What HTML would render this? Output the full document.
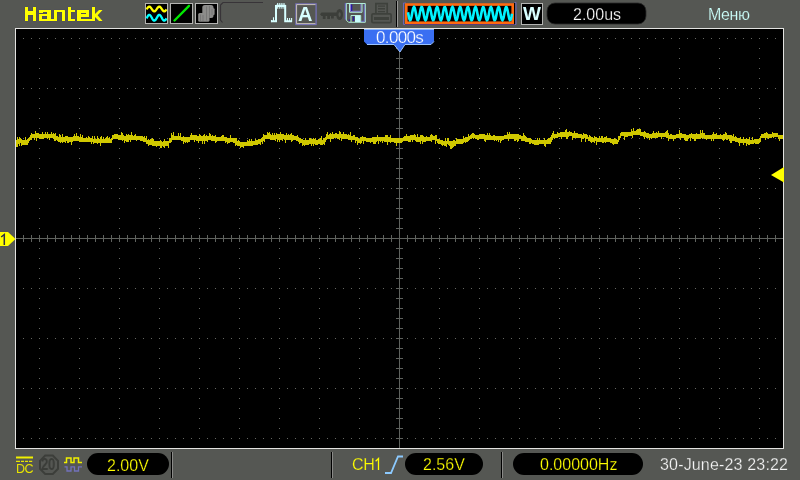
<!DOCTYPE html>
<html><head><meta charset="utf-8">
<style>
html,body{margin:0;padding:0;}
body{width:800px;height:480px;overflow:hidden;background:#555753;position:relative;font-family:"Liberation Sans",sans-serif;}
svg{position:absolute;left:0;top:0;}
.t{position:absolute;white-space:nowrap;line-height:1;will-change:transform;}
</style></head><body>
<svg width="800" height="480" viewBox="0 0 800 480">
<defs><filter id="blur" x="-20%" y="-20%" width="140%" height="140%"><feGaussianBlur stdDeviation="0.6"/></filter></defs>
<rect x="15" y="28" width="769" height="421" fill="#e2e2e0"/>
<rect x="16" y="29" width="767" height="419" fill="#000"/>
<g shape-rendering="crispEdges">
<path d="M23 38h1v1h-1zM23 88h1v1h-1zM23 138h1v1h-1zM23 188h1v1h-1zM23 288h1v1h-1zM23 338h1v1h-1zM23 388h1v1h-1zM23 438h1v1h-1zM31 38h1v1h-1zM31 88h1v1h-1zM31 138h1v1h-1zM31 188h1v1h-1zM31 288h1v1h-1zM31 338h1v1h-1zM31 388h1v1h-1zM31 438h1v1h-1zM39 38h1v1h-1zM39 48h1v1h-1zM39 58h1v1h-1zM39 68h1v1h-1zM39 78h1v1h-1zM39 88h1v1h-1zM39 98h1v1h-1zM39 108h1v1h-1zM39 118h1v1h-1zM39 128h1v1h-1zM39 138h1v1h-1zM39 148h1v1h-1zM39 158h1v1h-1zM39 168h1v1h-1zM39 178h1v1h-1zM39 188h1v1h-1zM39 198h1v1h-1zM39 208h1v1h-1zM39 218h1v1h-1zM39 228h1v1h-1zM39 238h1v1h-1zM39 248h1v1h-1zM39 258h1v1h-1zM39 268h1v1h-1zM39 278h1v1h-1zM39 288h1v1h-1zM39 298h1v1h-1zM39 308h1v1h-1zM39 318h1v1h-1zM39 328h1v1h-1zM39 338h1v1h-1zM39 348h1v1h-1zM39 358h1v1h-1zM39 368h1v1h-1zM39 378h1v1h-1zM39 388h1v1h-1zM39 398h1v1h-1zM39 408h1v1h-1zM39 418h1v1h-1zM39 428h1v1h-1zM39 438h1v1h-1zM47 38h1v1h-1zM47 88h1v1h-1zM47 138h1v1h-1zM47 188h1v1h-1zM47 288h1v1h-1zM47 338h1v1h-1zM47 388h1v1h-1zM47 438h1v1h-1zM55 38h1v1h-1zM55 88h1v1h-1zM55 138h1v1h-1zM55 188h1v1h-1zM55 288h1v1h-1zM55 338h1v1h-1zM55 388h1v1h-1zM55 438h1v1h-1zM63 38h1v1h-1zM63 88h1v1h-1zM63 138h1v1h-1zM63 188h1v1h-1zM63 288h1v1h-1zM63 338h1v1h-1zM63 388h1v1h-1zM63 438h1v1h-1zM71 38h1v1h-1zM71 88h1v1h-1zM71 138h1v1h-1zM71 188h1v1h-1zM71 288h1v1h-1zM71 338h1v1h-1zM71 388h1v1h-1zM71 438h1v1h-1zM79 38h1v1h-1zM79 48h1v1h-1zM79 58h1v1h-1zM79 68h1v1h-1zM79 78h1v1h-1zM79 88h1v1h-1zM79 98h1v1h-1zM79 108h1v1h-1zM79 118h1v1h-1zM79 128h1v1h-1zM79 138h1v1h-1zM79 148h1v1h-1zM79 158h1v1h-1zM79 168h1v1h-1zM79 178h1v1h-1zM79 188h1v1h-1zM79 198h1v1h-1zM79 208h1v1h-1zM79 218h1v1h-1zM79 228h1v1h-1zM79 238h1v1h-1zM79 248h1v1h-1zM79 258h1v1h-1zM79 268h1v1h-1zM79 278h1v1h-1zM79 288h1v1h-1zM79 298h1v1h-1zM79 308h1v1h-1zM79 318h1v1h-1zM79 328h1v1h-1zM79 338h1v1h-1zM79 348h1v1h-1zM79 358h1v1h-1zM79 368h1v1h-1zM79 378h1v1h-1zM79 388h1v1h-1zM79 398h1v1h-1zM79 408h1v1h-1zM79 418h1v1h-1zM79 428h1v1h-1zM79 438h1v1h-1zM87 38h1v1h-1zM87 88h1v1h-1zM87 138h1v1h-1zM87 188h1v1h-1zM87 288h1v1h-1zM87 338h1v1h-1zM87 388h1v1h-1zM87 438h1v1h-1zM95 38h1v1h-1zM95 88h1v1h-1zM95 138h1v1h-1zM95 188h1v1h-1zM95 288h1v1h-1zM95 338h1v1h-1zM95 388h1v1h-1zM95 438h1v1h-1zM103 38h1v1h-1zM103 88h1v1h-1zM103 138h1v1h-1zM103 188h1v1h-1zM103 288h1v1h-1zM103 338h1v1h-1zM103 388h1v1h-1zM103 438h1v1h-1zM111 38h1v1h-1zM111 88h1v1h-1zM111 138h1v1h-1zM111 188h1v1h-1zM111 288h1v1h-1zM111 338h1v1h-1zM111 388h1v1h-1zM111 438h1v1h-1zM119 38h1v1h-1zM119 48h1v1h-1zM119 58h1v1h-1zM119 68h1v1h-1zM119 78h1v1h-1zM119 88h1v1h-1zM119 98h1v1h-1zM119 108h1v1h-1zM119 118h1v1h-1zM119 128h1v1h-1zM119 138h1v1h-1zM119 148h1v1h-1zM119 158h1v1h-1zM119 168h1v1h-1zM119 178h1v1h-1zM119 188h1v1h-1zM119 198h1v1h-1zM119 208h1v1h-1zM119 218h1v1h-1zM119 228h1v1h-1zM119 238h1v1h-1zM119 248h1v1h-1zM119 258h1v1h-1zM119 268h1v1h-1zM119 278h1v1h-1zM119 288h1v1h-1zM119 298h1v1h-1zM119 308h1v1h-1zM119 318h1v1h-1zM119 328h1v1h-1zM119 338h1v1h-1zM119 348h1v1h-1zM119 358h1v1h-1zM119 368h1v1h-1zM119 378h1v1h-1zM119 388h1v1h-1zM119 398h1v1h-1zM119 408h1v1h-1zM119 418h1v1h-1zM119 428h1v1h-1zM119 438h1v1h-1zM127 38h1v1h-1zM127 88h1v1h-1zM127 138h1v1h-1zM127 188h1v1h-1zM127 288h1v1h-1zM127 338h1v1h-1zM127 388h1v1h-1zM127 438h1v1h-1zM135 38h1v1h-1zM135 88h1v1h-1zM135 138h1v1h-1zM135 188h1v1h-1zM135 288h1v1h-1zM135 338h1v1h-1zM135 388h1v1h-1zM135 438h1v1h-1zM143 38h1v1h-1zM143 88h1v1h-1zM143 138h1v1h-1zM143 188h1v1h-1zM143 288h1v1h-1zM143 338h1v1h-1zM143 388h1v1h-1zM143 438h1v1h-1zM151 38h1v1h-1zM151 88h1v1h-1zM151 138h1v1h-1zM151 188h1v1h-1zM151 288h1v1h-1zM151 338h1v1h-1zM151 388h1v1h-1zM151 438h1v1h-1zM159 38h1v1h-1zM159 48h1v1h-1zM159 58h1v1h-1zM159 68h1v1h-1zM159 78h1v1h-1zM159 88h1v1h-1zM159 98h1v1h-1zM159 108h1v1h-1zM159 118h1v1h-1zM159 128h1v1h-1zM159 138h1v1h-1zM159 148h1v1h-1zM159 158h1v1h-1zM159 168h1v1h-1zM159 178h1v1h-1zM159 188h1v1h-1zM159 198h1v1h-1zM159 208h1v1h-1zM159 218h1v1h-1zM159 228h1v1h-1zM159 238h1v1h-1zM159 248h1v1h-1zM159 258h1v1h-1zM159 268h1v1h-1zM159 278h1v1h-1zM159 288h1v1h-1zM159 298h1v1h-1zM159 308h1v1h-1zM159 318h1v1h-1zM159 328h1v1h-1zM159 338h1v1h-1zM159 348h1v1h-1zM159 358h1v1h-1zM159 368h1v1h-1zM159 378h1v1h-1zM159 388h1v1h-1zM159 398h1v1h-1zM159 408h1v1h-1zM159 418h1v1h-1zM159 428h1v1h-1zM159 438h1v1h-1zM167 38h1v1h-1zM167 88h1v1h-1zM167 138h1v1h-1zM167 188h1v1h-1zM167 288h1v1h-1zM167 338h1v1h-1zM167 388h1v1h-1zM167 438h1v1h-1zM175 38h1v1h-1zM175 88h1v1h-1zM175 138h1v1h-1zM175 188h1v1h-1zM175 288h1v1h-1zM175 338h1v1h-1zM175 388h1v1h-1zM175 438h1v1h-1zM183 38h1v1h-1zM183 88h1v1h-1zM183 138h1v1h-1zM183 188h1v1h-1zM183 288h1v1h-1zM183 338h1v1h-1zM183 388h1v1h-1zM183 438h1v1h-1zM191 38h1v1h-1zM191 88h1v1h-1zM191 138h1v1h-1zM191 188h1v1h-1zM191 288h1v1h-1zM191 338h1v1h-1zM191 388h1v1h-1zM191 438h1v1h-1zM199 38h1v1h-1zM199 48h1v1h-1zM199 58h1v1h-1zM199 68h1v1h-1zM199 78h1v1h-1zM199 88h1v1h-1zM199 98h1v1h-1zM199 108h1v1h-1zM199 118h1v1h-1zM199 128h1v1h-1zM199 138h1v1h-1zM199 148h1v1h-1zM199 158h1v1h-1zM199 168h1v1h-1zM199 178h1v1h-1zM199 188h1v1h-1zM199 198h1v1h-1zM199 208h1v1h-1zM199 218h1v1h-1zM199 228h1v1h-1zM199 238h1v1h-1zM199 248h1v1h-1zM199 258h1v1h-1zM199 268h1v1h-1zM199 278h1v1h-1zM199 288h1v1h-1zM199 298h1v1h-1zM199 308h1v1h-1zM199 318h1v1h-1zM199 328h1v1h-1zM199 338h1v1h-1zM199 348h1v1h-1zM199 358h1v1h-1zM199 368h1v1h-1zM199 378h1v1h-1zM199 388h1v1h-1zM199 398h1v1h-1zM199 408h1v1h-1zM199 418h1v1h-1zM199 428h1v1h-1zM199 438h1v1h-1zM207 38h1v1h-1zM207 88h1v1h-1zM207 138h1v1h-1zM207 188h1v1h-1zM207 288h1v1h-1zM207 338h1v1h-1zM207 388h1v1h-1zM207 438h1v1h-1zM215 38h1v1h-1zM215 88h1v1h-1zM215 138h1v1h-1zM215 188h1v1h-1zM215 288h1v1h-1zM215 338h1v1h-1zM215 388h1v1h-1zM215 438h1v1h-1zM223 38h1v1h-1zM223 88h1v1h-1zM223 138h1v1h-1zM223 188h1v1h-1zM223 288h1v1h-1zM223 338h1v1h-1zM223 388h1v1h-1zM223 438h1v1h-1zM231 38h1v1h-1zM231 88h1v1h-1zM231 138h1v1h-1zM231 188h1v1h-1zM231 288h1v1h-1zM231 338h1v1h-1zM231 388h1v1h-1zM231 438h1v1h-1zM239 38h1v1h-1zM239 48h1v1h-1zM239 58h1v1h-1zM239 68h1v1h-1zM239 78h1v1h-1zM239 88h1v1h-1zM239 98h1v1h-1zM239 108h1v1h-1zM239 118h1v1h-1zM239 128h1v1h-1zM239 138h1v1h-1zM239 148h1v1h-1zM239 158h1v1h-1zM239 168h1v1h-1zM239 178h1v1h-1zM239 188h1v1h-1zM239 198h1v1h-1zM239 208h1v1h-1zM239 218h1v1h-1zM239 228h1v1h-1zM239 238h1v1h-1zM239 248h1v1h-1zM239 258h1v1h-1zM239 268h1v1h-1zM239 278h1v1h-1zM239 288h1v1h-1zM239 298h1v1h-1zM239 308h1v1h-1zM239 318h1v1h-1zM239 328h1v1h-1zM239 338h1v1h-1zM239 348h1v1h-1zM239 358h1v1h-1zM239 368h1v1h-1zM239 378h1v1h-1zM239 388h1v1h-1zM239 398h1v1h-1zM239 408h1v1h-1zM239 418h1v1h-1zM239 428h1v1h-1zM239 438h1v1h-1zM247 38h1v1h-1zM247 88h1v1h-1zM247 138h1v1h-1zM247 188h1v1h-1zM247 288h1v1h-1zM247 338h1v1h-1zM247 388h1v1h-1zM247 438h1v1h-1zM255 38h1v1h-1zM255 88h1v1h-1zM255 138h1v1h-1zM255 188h1v1h-1zM255 288h1v1h-1zM255 338h1v1h-1zM255 388h1v1h-1zM255 438h1v1h-1zM263 38h1v1h-1zM263 88h1v1h-1zM263 138h1v1h-1zM263 188h1v1h-1zM263 288h1v1h-1zM263 338h1v1h-1zM263 388h1v1h-1zM263 438h1v1h-1zM271 38h1v1h-1zM271 88h1v1h-1zM271 138h1v1h-1zM271 188h1v1h-1zM271 288h1v1h-1zM271 338h1v1h-1zM271 388h1v1h-1zM271 438h1v1h-1zM279 38h1v1h-1zM279 48h1v1h-1zM279 58h1v1h-1zM279 68h1v1h-1zM279 78h1v1h-1zM279 88h1v1h-1zM279 98h1v1h-1zM279 108h1v1h-1zM279 118h1v1h-1zM279 128h1v1h-1zM279 138h1v1h-1zM279 148h1v1h-1zM279 158h1v1h-1zM279 168h1v1h-1zM279 178h1v1h-1zM279 188h1v1h-1zM279 198h1v1h-1zM279 208h1v1h-1zM279 218h1v1h-1zM279 228h1v1h-1zM279 238h1v1h-1zM279 248h1v1h-1zM279 258h1v1h-1zM279 268h1v1h-1zM279 278h1v1h-1zM279 288h1v1h-1zM279 298h1v1h-1zM279 308h1v1h-1zM279 318h1v1h-1zM279 328h1v1h-1zM279 338h1v1h-1zM279 348h1v1h-1zM279 358h1v1h-1zM279 368h1v1h-1zM279 378h1v1h-1zM279 388h1v1h-1zM279 398h1v1h-1zM279 408h1v1h-1zM279 418h1v1h-1zM279 428h1v1h-1zM279 438h1v1h-1zM287 38h1v1h-1zM287 88h1v1h-1zM287 138h1v1h-1zM287 188h1v1h-1zM287 288h1v1h-1zM287 338h1v1h-1zM287 388h1v1h-1zM287 438h1v1h-1zM295 38h1v1h-1zM295 88h1v1h-1zM295 138h1v1h-1zM295 188h1v1h-1zM295 288h1v1h-1zM295 338h1v1h-1zM295 388h1v1h-1zM295 438h1v1h-1zM303 38h1v1h-1zM303 88h1v1h-1zM303 138h1v1h-1zM303 188h1v1h-1zM303 288h1v1h-1zM303 338h1v1h-1zM303 388h1v1h-1zM303 438h1v1h-1zM311 38h1v1h-1zM311 88h1v1h-1zM311 138h1v1h-1zM311 188h1v1h-1zM311 288h1v1h-1zM311 338h1v1h-1zM311 388h1v1h-1zM311 438h1v1h-1zM319 38h1v1h-1zM319 48h1v1h-1zM319 58h1v1h-1zM319 68h1v1h-1zM319 78h1v1h-1zM319 88h1v1h-1zM319 98h1v1h-1zM319 108h1v1h-1zM319 118h1v1h-1zM319 128h1v1h-1zM319 138h1v1h-1zM319 148h1v1h-1zM319 158h1v1h-1zM319 168h1v1h-1zM319 178h1v1h-1zM319 188h1v1h-1zM319 198h1v1h-1zM319 208h1v1h-1zM319 218h1v1h-1zM319 228h1v1h-1zM319 238h1v1h-1zM319 248h1v1h-1zM319 258h1v1h-1zM319 268h1v1h-1zM319 278h1v1h-1zM319 288h1v1h-1zM319 298h1v1h-1zM319 308h1v1h-1zM319 318h1v1h-1zM319 328h1v1h-1zM319 338h1v1h-1zM319 348h1v1h-1zM319 358h1v1h-1zM319 368h1v1h-1zM319 378h1v1h-1zM319 388h1v1h-1zM319 398h1v1h-1zM319 408h1v1h-1zM319 418h1v1h-1zM319 428h1v1h-1zM319 438h1v1h-1zM327 38h1v1h-1zM327 88h1v1h-1zM327 138h1v1h-1zM327 188h1v1h-1zM327 288h1v1h-1zM327 338h1v1h-1zM327 388h1v1h-1zM327 438h1v1h-1zM335 38h1v1h-1zM335 88h1v1h-1zM335 138h1v1h-1zM335 188h1v1h-1zM335 288h1v1h-1zM335 338h1v1h-1zM335 388h1v1h-1zM335 438h1v1h-1zM343 38h1v1h-1zM343 88h1v1h-1zM343 138h1v1h-1zM343 188h1v1h-1zM343 288h1v1h-1zM343 338h1v1h-1zM343 388h1v1h-1zM343 438h1v1h-1zM351 38h1v1h-1zM351 88h1v1h-1zM351 138h1v1h-1zM351 188h1v1h-1zM351 288h1v1h-1zM351 338h1v1h-1zM351 388h1v1h-1zM351 438h1v1h-1zM359 38h1v1h-1zM359 48h1v1h-1zM359 58h1v1h-1zM359 68h1v1h-1zM359 78h1v1h-1zM359 88h1v1h-1zM359 98h1v1h-1zM359 108h1v1h-1zM359 118h1v1h-1zM359 128h1v1h-1zM359 138h1v1h-1zM359 148h1v1h-1zM359 158h1v1h-1zM359 168h1v1h-1zM359 178h1v1h-1zM359 188h1v1h-1zM359 198h1v1h-1zM359 208h1v1h-1zM359 218h1v1h-1zM359 228h1v1h-1zM359 238h1v1h-1zM359 248h1v1h-1zM359 258h1v1h-1zM359 268h1v1h-1zM359 278h1v1h-1zM359 288h1v1h-1zM359 298h1v1h-1zM359 308h1v1h-1zM359 318h1v1h-1zM359 328h1v1h-1zM359 338h1v1h-1zM359 348h1v1h-1zM359 358h1v1h-1zM359 368h1v1h-1zM359 378h1v1h-1zM359 388h1v1h-1zM359 398h1v1h-1zM359 408h1v1h-1zM359 418h1v1h-1zM359 428h1v1h-1zM359 438h1v1h-1zM367 38h1v1h-1zM367 88h1v1h-1zM367 138h1v1h-1zM367 188h1v1h-1zM367 288h1v1h-1zM367 338h1v1h-1zM367 388h1v1h-1zM367 438h1v1h-1zM375 38h1v1h-1zM375 88h1v1h-1zM375 138h1v1h-1zM375 188h1v1h-1zM375 288h1v1h-1zM375 338h1v1h-1zM375 388h1v1h-1zM375 438h1v1h-1zM383 38h1v1h-1zM383 88h1v1h-1zM383 138h1v1h-1zM383 188h1v1h-1zM383 288h1v1h-1zM383 338h1v1h-1zM383 388h1v1h-1zM383 438h1v1h-1zM391 38h1v1h-1zM391 88h1v1h-1zM391 138h1v1h-1zM391 188h1v1h-1zM391 288h1v1h-1zM391 338h1v1h-1zM391 388h1v1h-1zM391 438h1v1h-1zM399 38h1v1h-1zM399 88h1v1h-1zM399 138h1v1h-1zM399 188h1v1h-1zM399 288h1v1h-1zM399 338h1v1h-1zM399 388h1v1h-1zM399 438h1v1h-1zM407 38h1v1h-1zM407 88h1v1h-1zM407 138h1v1h-1zM407 188h1v1h-1zM407 288h1v1h-1zM407 338h1v1h-1zM407 388h1v1h-1zM407 438h1v1h-1zM415 38h1v1h-1zM415 88h1v1h-1zM415 138h1v1h-1zM415 188h1v1h-1zM415 288h1v1h-1zM415 338h1v1h-1zM415 388h1v1h-1zM415 438h1v1h-1zM423 38h1v1h-1zM423 88h1v1h-1zM423 138h1v1h-1zM423 188h1v1h-1zM423 288h1v1h-1zM423 338h1v1h-1zM423 388h1v1h-1zM423 438h1v1h-1zM431 38h1v1h-1zM431 88h1v1h-1zM431 138h1v1h-1zM431 188h1v1h-1zM431 288h1v1h-1zM431 338h1v1h-1zM431 388h1v1h-1zM431 438h1v1h-1zM439 38h1v1h-1zM439 48h1v1h-1zM439 58h1v1h-1zM439 68h1v1h-1zM439 78h1v1h-1zM439 88h1v1h-1zM439 98h1v1h-1zM439 108h1v1h-1zM439 118h1v1h-1zM439 128h1v1h-1zM439 138h1v1h-1zM439 148h1v1h-1zM439 158h1v1h-1zM439 168h1v1h-1zM439 178h1v1h-1zM439 188h1v1h-1zM439 198h1v1h-1zM439 208h1v1h-1zM439 218h1v1h-1zM439 228h1v1h-1zM439 238h1v1h-1zM439 248h1v1h-1zM439 258h1v1h-1zM439 268h1v1h-1zM439 278h1v1h-1zM439 288h1v1h-1zM439 298h1v1h-1zM439 308h1v1h-1zM439 318h1v1h-1zM439 328h1v1h-1zM439 338h1v1h-1zM439 348h1v1h-1zM439 358h1v1h-1zM439 368h1v1h-1zM439 378h1v1h-1zM439 388h1v1h-1zM439 398h1v1h-1zM439 408h1v1h-1zM439 418h1v1h-1zM439 428h1v1h-1zM439 438h1v1h-1zM447 38h1v1h-1zM447 88h1v1h-1zM447 138h1v1h-1zM447 188h1v1h-1zM447 288h1v1h-1zM447 338h1v1h-1zM447 388h1v1h-1zM447 438h1v1h-1zM455 38h1v1h-1zM455 88h1v1h-1zM455 138h1v1h-1zM455 188h1v1h-1zM455 288h1v1h-1zM455 338h1v1h-1zM455 388h1v1h-1zM455 438h1v1h-1zM463 38h1v1h-1zM463 88h1v1h-1zM463 138h1v1h-1zM463 188h1v1h-1zM463 288h1v1h-1zM463 338h1v1h-1zM463 388h1v1h-1zM463 438h1v1h-1zM471 38h1v1h-1zM471 88h1v1h-1zM471 138h1v1h-1zM471 188h1v1h-1zM471 288h1v1h-1zM471 338h1v1h-1zM471 388h1v1h-1zM471 438h1v1h-1zM479 38h1v1h-1zM479 48h1v1h-1zM479 58h1v1h-1zM479 68h1v1h-1zM479 78h1v1h-1zM479 88h1v1h-1zM479 98h1v1h-1zM479 108h1v1h-1zM479 118h1v1h-1zM479 128h1v1h-1zM479 138h1v1h-1zM479 148h1v1h-1zM479 158h1v1h-1zM479 168h1v1h-1zM479 178h1v1h-1zM479 188h1v1h-1zM479 198h1v1h-1zM479 208h1v1h-1zM479 218h1v1h-1zM479 228h1v1h-1zM479 238h1v1h-1zM479 248h1v1h-1zM479 258h1v1h-1zM479 268h1v1h-1zM479 278h1v1h-1zM479 288h1v1h-1zM479 298h1v1h-1zM479 308h1v1h-1zM479 318h1v1h-1zM479 328h1v1h-1zM479 338h1v1h-1zM479 348h1v1h-1zM479 358h1v1h-1zM479 368h1v1h-1zM479 378h1v1h-1zM479 388h1v1h-1zM479 398h1v1h-1zM479 408h1v1h-1zM479 418h1v1h-1zM479 428h1v1h-1zM479 438h1v1h-1zM487 38h1v1h-1zM487 88h1v1h-1zM487 138h1v1h-1zM487 188h1v1h-1zM487 288h1v1h-1zM487 338h1v1h-1zM487 388h1v1h-1zM487 438h1v1h-1zM495 38h1v1h-1zM495 88h1v1h-1zM495 138h1v1h-1zM495 188h1v1h-1zM495 288h1v1h-1zM495 338h1v1h-1zM495 388h1v1h-1zM495 438h1v1h-1zM503 38h1v1h-1zM503 88h1v1h-1zM503 138h1v1h-1zM503 188h1v1h-1zM503 288h1v1h-1zM503 338h1v1h-1zM503 388h1v1h-1zM503 438h1v1h-1zM511 38h1v1h-1zM511 88h1v1h-1zM511 138h1v1h-1zM511 188h1v1h-1zM511 288h1v1h-1zM511 338h1v1h-1zM511 388h1v1h-1zM511 438h1v1h-1zM519 38h1v1h-1zM519 48h1v1h-1zM519 58h1v1h-1zM519 68h1v1h-1zM519 78h1v1h-1zM519 88h1v1h-1zM519 98h1v1h-1zM519 108h1v1h-1zM519 118h1v1h-1zM519 128h1v1h-1zM519 138h1v1h-1zM519 148h1v1h-1zM519 158h1v1h-1zM519 168h1v1h-1zM519 178h1v1h-1zM519 188h1v1h-1zM519 198h1v1h-1zM519 208h1v1h-1zM519 218h1v1h-1zM519 228h1v1h-1zM519 238h1v1h-1zM519 248h1v1h-1zM519 258h1v1h-1zM519 268h1v1h-1zM519 278h1v1h-1zM519 288h1v1h-1zM519 298h1v1h-1zM519 308h1v1h-1zM519 318h1v1h-1zM519 328h1v1h-1zM519 338h1v1h-1zM519 348h1v1h-1zM519 358h1v1h-1zM519 368h1v1h-1zM519 378h1v1h-1zM519 388h1v1h-1zM519 398h1v1h-1zM519 408h1v1h-1zM519 418h1v1h-1zM519 428h1v1h-1zM519 438h1v1h-1zM527 38h1v1h-1zM527 88h1v1h-1zM527 138h1v1h-1zM527 188h1v1h-1zM527 288h1v1h-1zM527 338h1v1h-1zM527 388h1v1h-1zM527 438h1v1h-1zM535 38h1v1h-1zM535 88h1v1h-1zM535 138h1v1h-1zM535 188h1v1h-1zM535 288h1v1h-1zM535 338h1v1h-1zM535 388h1v1h-1zM535 438h1v1h-1zM543 38h1v1h-1zM543 88h1v1h-1zM543 138h1v1h-1zM543 188h1v1h-1zM543 288h1v1h-1zM543 338h1v1h-1zM543 388h1v1h-1zM543 438h1v1h-1zM551 38h1v1h-1zM551 88h1v1h-1zM551 138h1v1h-1zM551 188h1v1h-1zM551 288h1v1h-1zM551 338h1v1h-1zM551 388h1v1h-1zM551 438h1v1h-1zM559 38h1v1h-1zM559 48h1v1h-1zM559 58h1v1h-1zM559 68h1v1h-1zM559 78h1v1h-1zM559 88h1v1h-1zM559 98h1v1h-1zM559 108h1v1h-1zM559 118h1v1h-1zM559 128h1v1h-1zM559 138h1v1h-1zM559 148h1v1h-1zM559 158h1v1h-1zM559 168h1v1h-1zM559 178h1v1h-1zM559 188h1v1h-1zM559 198h1v1h-1zM559 208h1v1h-1zM559 218h1v1h-1zM559 228h1v1h-1zM559 238h1v1h-1zM559 248h1v1h-1zM559 258h1v1h-1zM559 268h1v1h-1zM559 278h1v1h-1zM559 288h1v1h-1zM559 298h1v1h-1zM559 308h1v1h-1zM559 318h1v1h-1zM559 328h1v1h-1zM559 338h1v1h-1zM559 348h1v1h-1zM559 358h1v1h-1zM559 368h1v1h-1zM559 378h1v1h-1zM559 388h1v1h-1zM559 398h1v1h-1zM559 408h1v1h-1zM559 418h1v1h-1zM559 428h1v1h-1zM559 438h1v1h-1zM567 38h1v1h-1zM567 88h1v1h-1zM567 138h1v1h-1zM567 188h1v1h-1zM567 288h1v1h-1zM567 338h1v1h-1zM567 388h1v1h-1zM567 438h1v1h-1zM575 38h1v1h-1zM575 88h1v1h-1zM575 138h1v1h-1zM575 188h1v1h-1zM575 288h1v1h-1zM575 338h1v1h-1zM575 388h1v1h-1zM575 438h1v1h-1zM583 38h1v1h-1zM583 88h1v1h-1zM583 138h1v1h-1zM583 188h1v1h-1zM583 288h1v1h-1zM583 338h1v1h-1zM583 388h1v1h-1zM583 438h1v1h-1zM591 38h1v1h-1zM591 88h1v1h-1zM591 138h1v1h-1zM591 188h1v1h-1zM591 288h1v1h-1zM591 338h1v1h-1zM591 388h1v1h-1zM591 438h1v1h-1zM599 38h1v1h-1zM599 48h1v1h-1zM599 58h1v1h-1zM599 68h1v1h-1zM599 78h1v1h-1zM599 88h1v1h-1zM599 98h1v1h-1zM599 108h1v1h-1zM599 118h1v1h-1zM599 128h1v1h-1zM599 138h1v1h-1zM599 148h1v1h-1zM599 158h1v1h-1zM599 168h1v1h-1zM599 178h1v1h-1zM599 188h1v1h-1zM599 198h1v1h-1zM599 208h1v1h-1zM599 218h1v1h-1zM599 228h1v1h-1zM599 238h1v1h-1zM599 248h1v1h-1zM599 258h1v1h-1zM599 268h1v1h-1zM599 278h1v1h-1zM599 288h1v1h-1zM599 298h1v1h-1zM599 308h1v1h-1zM599 318h1v1h-1zM599 328h1v1h-1zM599 338h1v1h-1zM599 348h1v1h-1zM599 358h1v1h-1zM599 368h1v1h-1zM599 378h1v1h-1zM599 388h1v1h-1zM599 398h1v1h-1zM599 408h1v1h-1zM599 418h1v1h-1zM599 428h1v1h-1zM599 438h1v1h-1zM607 38h1v1h-1zM607 88h1v1h-1zM607 138h1v1h-1zM607 188h1v1h-1zM607 288h1v1h-1zM607 338h1v1h-1zM607 388h1v1h-1zM607 438h1v1h-1zM615 38h1v1h-1zM615 88h1v1h-1zM615 138h1v1h-1zM615 188h1v1h-1zM615 288h1v1h-1zM615 338h1v1h-1zM615 388h1v1h-1zM615 438h1v1h-1zM623 38h1v1h-1zM623 88h1v1h-1zM623 138h1v1h-1zM623 188h1v1h-1zM623 288h1v1h-1zM623 338h1v1h-1zM623 388h1v1h-1zM623 438h1v1h-1zM631 38h1v1h-1zM631 88h1v1h-1zM631 138h1v1h-1zM631 188h1v1h-1zM631 288h1v1h-1zM631 338h1v1h-1zM631 388h1v1h-1zM631 438h1v1h-1zM639 38h1v1h-1zM639 48h1v1h-1zM639 58h1v1h-1zM639 68h1v1h-1zM639 78h1v1h-1zM639 88h1v1h-1zM639 98h1v1h-1zM639 108h1v1h-1zM639 118h1v1h-1zM639 128h1v1h-1zM639 138h1v1h-1zM639 148h1v1h-1zM639 158h1v1h-1zM639 168h1v1h-1zM639 178h1v1h-1zM639 188h1v1h-1zM639 198h1v1h-1zM639 208h1v1h-1zM639 218h1v1h-1zM639 228h1v1h-1zM639 238h1v1h-1zM639 248h1v1h-1zM639 258h1v1h-1zM639 268h1v1h-1zM639 278h1v1h-1zM639 288h1v1h-1zM639 298h1v1h-1zM639 308h1v1h-1zM639 318h1v1h-1zM639 328h1v1h-1zM639 338h1v1h-1zM639 348h1v1h-1zM639 358h1v1h-1zM639 368h1v1h-1zM639 378h1v1h-1zM639 388h1v1h-1zM639 398h1v1h-1zM639 408h1v1h-1zM639 418h1v1h-1zM639 428h1v1h-1zM639 438h1v1h-1zM647 38h1v1h-1zM647 88h1v1h-1zM647 138h1v1h-1zM647 188h1v1h-1zM647 288h1v1h-1zM647 338h1v1h-1zM647 388h1v1h-1zM647 438h1v1h-1zM655 38h1v1h-1zM655 88h1v1h-1zM655 138h1v1h-1zM655 188h1v1h-1zM655 288h1v1h-1zM655 338h1v1h-1zM655 388h1v1h-1zM655 438h1v1h-1zM663 38h1v1h-1zM663 88h1v1h-1zM663 138h1v1h-1zM663 188h1v1h-1zM663 288h1v1h-1zM663 338h1v1h-1zM663 388h1v1h-1zM663 438h1v1h-1zM671 38h1v1h-1zM671 88h1v1h-1zM671 138h1v1h-1zM671 188h1v1h-1zM671 288h1v1h-1zM671 338h1v1h-1zM671 388h1v1h-1zM671 438h1v1h-1zM679 38h1v1h-1zM679 48h1v1h-1zM679 58h1v1h-1zM679 68h1v1h-1zM679 78h1v1h-1zM679 88h1v1h-1zM679 98h1v1h-1zM679 108h1v1h-1zM679 118h1v1h-1zM679 128h1v1h-1zM679 138h1v1h-1zM679 148h1v1h-1zM679 158h1v1h-1zM679 168h1v1h-1zM679 178h1v1h-1zM679 188h1v1h-1zM679 198h1v1h-1zM679 208h1v1h-1zM679 218h1v1h-1zM679 228h1v1h-1zM679 238h1v1h-1zM679 248h1v1h-1zM679 258h1v1h-1zM679 268h1v1h-1zM679 278h1v1h-1zM679 288h1v1h-1zM679 298h1v1h-1zM679 308h1v1h-1zM679 318h1v1h-1zM679 328h1v1h-1zM679 338h1v1h-1zM679 348h1v1h-1zM679 358h1v1h-1zM679 368h1v1h-1zM679 378h1v1h-1zM679 388h1v1h-1zM679 398h1v1h-1zM679 408h1v1h-1zM679 418h1v1h-1zM679 428h1v1h-1zM679 438h1v1h-1zM687 38h1v1h-1zM687 88h1v1h-1zM687 138h1v1h-1zM687 188h1v1h-1zM687 288h1v1h-1zM687 338h1v1h-1zM687 388h1v1h-1zM687 438h1v1h-1zM695 38h1v1h-1zM695 88h1v1h-1zM695 138h1v1h-1zM695 188h1v1h-1zM695 288h1v1h-1zM695 338h1v1h-1zM695 388h1v1h-1zM695 438h1v1h-1zM703 38h1v1h-1zM703 88h1v1h-1zM703 138h1v1h-1zM703 188h1v1h-1zM703 288h1v1h-1zM703 338h1v1h-1zM703 388h1v1h-1zM703 438h1v1h-1zM711 38h1v1h-1zM711 88h1v1h-1zM711 138h1v1h-1zM711 188h1v1h-1zM711 288h1v1h-1zM711 338h1v1h-1zM711 388h1v1h-1zM711 438h1v1h-1zM719 38h1v1h-1zM719 48h1v1h-1zM719 58h1v1h-1zM719 68h1v1h-1zM719 78h1v1h-1zM719 88h1v1h-1zM719 98h1v1h-1zM719 108h1v1h-1zM719 118h1v1h-1zM719 128h1v1h-1zM719 138h1v1h-1zM719 148h1v1h-1zM719 158h1v1h-1zM719 168h1v1h-1zM719 178h1v1h-1zM719 188h1v1h-1zM719 198h1v1h-1zM719 208h1v1h-1zM719 218h1v1h-1zM719 228h1v1h-1zM719 238h1v1h-1zM719 248h1v1h-1zM719 258h1v1h-1zM719 268h1v1h-1zM719 278h1v1h-1zM719 288h1v1h-1zM719 298h1v1h-1zM719 308h1v1h-1zM719 318h1v1h-1zM719 328h1v1h-1zM719 338h1v1h-1zM719 348h1v1h-1zM719 358h1v1h-1zM719 368h1v1h-1zM719 378h1v1h-1zM719 388h1v1h-1zM719 398h1v1h-1zM719 408h1v1h-1zM719 418h1v1h-1zM719 428h1v1h-1zM719 438h1v1h-1zM727 38h1v1h-1zM727 88h1v1h-1zM727 138h1v1h-1zM727 188h1v1h-1zM727 288h1v1h-1zM727 338h1v1h-1zM727 388h1v1h-1zM727 438h1v1h-1zM735 38h1v1h-1zM735 88h1v1h-1zM735 138h1v1h-1zM735 188h1v1h-1zM735 288h1v1h-1zM735 338h1v1h-1zM735 388h1v1h-1zM735 438h1v1h-1zM743 38h1v1h-1zM743 88h1v1h-1zM743 138h1v1h-1zM743 188h1v1h-1zM743 288h1v1h-1zM743 338h1v1h-1zM743 388h1v1h-1zM743 438h1v1h-1zM751 38h1v1h-1zM751 88h1v1h-1zM751 138h1v1h-1zM751 188h1v1h-1zM751 288h1v1h-1zM751 338h1v1h-1zM751 388h1v1h-1zM751 438h1v1h-1zM759 38h1v1h-1zM759 48h1v1h-1zM759 58h1v1h-1zM759 68h1v1h-1zM759 78h1v1h-1zM759 88h1v1h-1zM759 98h1v1h-1zM759 108h1v1h-1zM759 118h1v1h-1zM759 128h1v1h-1zM759 138h1v1h-1zM759 148h1v1h-1zM759 158h1v1h-1zM759 168h1v1h-1zM759 178h1v1h-1zM759 188h1v1h-1zM759 198h1v1h-1zM759 208h1v1h-1zM759 218h1v1h-1zM759 228h1v1h-1zM759 238h1v1h-1zM759 248h1v1h-1zM759 258h1v1h-1zM759 268h1v1h-1zM759 278h1v1h-1zM759 288h1v1h-1zM759 298h1v1h-1zM759 308h1v1h-1zM759 318h1v1h-1zM759 328h1v1h-1zM759 338h1v1h-1zM759 348h1v1h-1zM759 358h1v1h-1zM759 368h1v1h-1zM759 378h1v1h-1zM759 388h1v1h-1zM759 398h1v1h-1zM759 408h1v1h-1zM759 418h1v1h-1zM759 428h1v1h-1zM759 438h1v1h-1zM767 38h1v1h-1zM767 88h1v1h-1zM767 138h1v1h-1zM767 188h1v1h-1zM767 288h1v1h-1zM767 338h1v1h-1zM767 388h1v1h-1zM767 438h1v1h-1zM775 38h1v1h-1zM775 88h1v1h-1zM775 138h1v1h-1zM775 188h1v1h-1zM775 288h1v1h-1zM775 338h1v1h-1zM775 388h1v1h-1zM775 438h1v1h-1z" fill="#646662"/>
<rect x="16" y="238" width="767" height="1" fill="#5f625e"/>
<rect x="399" y="29" width="1" height="419" fill="#5f625e"/>
<path d="M23 235h1v7h-1zM31 235h1v7h-1zM39 235h1v7h-1zM47 235h1v7h-1zM55 235h1v7h-1zM63 235h1v7h-1zM71 235h1v7h-1zM79 235h1v7h-1zM87 235h1v7h-1zM95 235h1v7h-1zM103 235h1v7h-1zM111 235h1v7h-1zM119 235h1v7h-1zM127 235h1v7h-1zM135 235h1v7h-1zM143 235h1v7h-1zM151 235h1v7h-1zM159 235h1v7h-1zM167 235h1v7h-1zM175 235h1v7h-1zM183 235h1v7h-1zM191 235h1v7h-1zM199 235h1v7h-1zM207 235h1v7h-1zM215 235h1v7h-1zM223 235h1v7h-1zM231 235h1v7h-1zM239 235h1v7h-1zM247 235h1v7h-1zM255 235h1v7h-1zM263 235h1v7h-1zM271 235h1v7h-1zM279 235h1v7h-1zM287 235h1v7h-1zM295 235h1v7h-1zM303 235h1v7h-1zM311 235h1v7h-1zM319 235h1v7h-1zM327 235h1v7h-1zM335 235h1v7h-1zM343 235h1v7h-1zM351 235h1v7h-1zM359 235h1v7h-1zM367 235h1v7h-1zM375 235h1v7h-1zM383 235h1v7h-1zM391 235h1v7h-1zM407 235h1v7h-1zM415 235h1v7h-1zM423 235h1v7h-1zM431 235h1v7h-1zM439 235h1v7h-1zM447 235h1v7h-1zM455 235h1v7h-1zM463 235h1v7h-1zM471 235h1v7h-1zM479 235h1v7h-1zM487 235h1v7h-1zM495 235h1v7h-1zM503 235h1v7h-1zM511 235h1v7h-1zM519 235h1v7h-1zM527 235h1v7h-1zM535 235h1v7h-1zM543 235h1v7h-1zM551 235h1v7h-1zM559 235h1v7h-1zM567 235h1v7h-1zM575 235h1v7h-1zM583 235h1v7h-1zM591 235h1v7h-1zM599 235h1v7h-1zM607 235h1v7h-1zM615 235h1v7h-1zM623 235h1v7h-1zM631 235h1v7h-1zM639 235h1v7h-1zM647 235h1v7h-1zM655 235h1v7h-1zM663 235h1v7h-1zM671 235h1v7h-1zM679 235h1v7h-1zM687 235h1v7h-1zM695 235h1v7h-1zM703 235h1v7h-1zM711 235h1v7h-1zM719 235h1v7h-1zM727 235h1v7h-1zM735 235h1v7h-1zM743 235h1v7h-1zM751 235h1v7h-1zM759 235h1v7h-1zM767 235h1v7h-1zM775 235h1v7h-1zM396 38h7v1h-7zM396 48h7v1h-7zM396 58h7v1h-7zM396 68h7v1h-7zM396 78h7v1h-7zM396 88h7v1h-7zM396 98h7v1h-7zM396 108h7v1h-7zM396 118h7v1h-7zM396 128h7v1h-7zM396 138h7v1h-7zM396 148h7v1h-7zM396 158h7v1h-7zM396 168h7v1h-7zM396 178h7v1h-7zM396 188h7v1h-7zM396 198h7v1h-7zM396 208h7v1h-7zM396 218h7v1h-7zM396 228h7v1h-7zM396 248h7v1h-7zM396 258h7v1h-7zM396 268h7v1h-7zM396 278h7v1h-7zM396 288h7v1h-7zM396 298h7v1h-7zM396 308h7v1h-7zM396 318h7v1h-7zM396 328h7v1h-7zM396 338h7v1h-7zM396 348h7v1h-7zM396 358h7v1h-7zM396 368h7v1h-7zM396 378h7v1h-7zM396 388h7v1h-7zM396 398h7v1h-7zM396 408h7v1h-7zM396 418h7v1h-7zM396 428h7v1h-7zM396 438h7v1h-7z" fill="#5f625e"/>
<path d="M16 140h1v7h-1zM17 137h1v10h-1zM18 139h1v5h-1zM19 137h1v9h-1zM20 138h1v5h-1zM21 139h1v7h-1zM22 140h1v5h-1zM23 140h1v5h-1zM24 140h1v5h-1zM25 137h1v8h-1zM26 140h1v5h-1zM27 139h1v6h-1zM28 138h1v5h-1zM29 137h1v4h-1zM30 135h1v5h-1zM31 133h1v7h-1zM32 134h1v4h-1zM33 134h1v4h-1zM34 134h1v6h-1zM35 131h1v7h-1zM36 133h1v8h-1zM37 133h1v5h-1zM38 133h1v5h-1zM39 134h1v5h-1zM40 134h1v5h-1zM41 134h1v5h-1zM42 132h1v7h-1zM43 134h1v5h-1zM44 134h1v4h-1zM45 132h1v6h-1zM46 134h1v4h-1zM47 132h1v7h-1zM48 134h1v4h-1zM49 134h1v6h-1zM50 134h1v4h-1zM51 132h1v6h-1zM52 134h1v4h-1zM53 133h1v6h-1zM54 134h1v7h-1zM55 133h1v8h-1zM56 136h1v4h-1zM57 136h1v5h-1zM58 137h1v5h-1zM59 134h1v8h-1zM60 135h1v8h-1zM61 137h1v5h-1zM62 134h1v9h-1zM63 137h1v5h-1zM64 137h1v5h-1zM65 136h1v7h-1zM66 136h1v5h-1zM67 136h1v7h-1zM68 137h1v6h-1zM69 137h1v5h-1zM70 137h1v5h-1zM71 137h1v8h-1zM72 137h1v5h-1zM73 136h1v5h-1zM74 134h1v7h-1zM75 136h1v5h-1zM76 133h1v8h-1zM77 136h1v5h-1zM78 136h1v5h-1zM79 137h1v5h-1zM80 134h1v8h-1zM81 137h1v5h-1zM82 135h1v7h-1zM83 138h1v4h-1zM84 138h1v4h-1zM85 138h1v4h-1zM86 137h1v5h-1zM87 138h1v4h-1zM88 136h1v6h-1zM89 137h1v5h-1zM90 138h1v4h-1zM91 138h1v6h-1zM92 136h1v6h-1zM93 139h1v5h-1zM94 136h1v7h-1zM95 139h1v4h-1zM96 139h1v4h-1zM97 136h1v8h-1zM98 138h1v5h-1zM99 139h1v4h-1zM100 137h1v9h-1zM101 136h1v7h-1zM102 139h1v4h-1zM103 137h1v6h-1zM104 139h1v4h-1zM105 138h1v5h-1zM106 137h1v6h-1zM107 136h1v7h-1zM108 138h1v5h-1zM109 137h1v6h-1zM110 139h1v4h-1zM111 138h1v5h-1zM112 135h1v5h-1zM113 135h1v4h-1zM114 134h1v5h-1zM115 134h1v5h-1zM116 134h1v5h-1zM117 134h1v5h-1zM118 135h1v5h-1zM119 135h1v5h-1zM120 135h1v5h-1zM121 132h1v8h-1zM122 133h1v8h-1zM123 135h1v5h-1zM124 136h1v7h-1zM125 136h1v5h-1zM126 134h1v8h-1zM127 135h1v7h-1zM128 134h1v8h-1zM129 135h1v5h-1zM130 135h1v7h-1zM131 132h1v8h-1zM132 135h1v5h-1zM133 136h1v4h-1zM134 135h1v5h-1zM135 134h1v6h-1zM136 136h1v5h-1zM137 136h1v4h-1zM138 136h1v4h-1zM139 136h1v4h-1zM140 136h1v5h-1zM141 136h1v5h-1zM142 136h1v5h-1zM143 137h1v5h-1zM144 136h1v6h-1zM145 138h1v4h-1zM146 136h1v8h-1zM147 140h1v4h-1zM148 139h1v7h-1zM149 140h1v5h-1zM150 139h1v6h-1zM151 139h1v6h-1zM152 138h1v8h-1zM153 139h1v7h-1zM154 141h1v5h-1zM155 141h1v5h-1zM156 141h1v6h-1zM157 141h1v5h-1zM158 141h1v5h-1zM159 141h1v5h-1zM160 140h1v8h-1zM161 141h1v7h-1zM162 142h1v4h-1zM163 141h1v6h-1zM164 139h1v9h-1zM165 141h1v5h-1zM166 141h1v5h-1zM167 141h1v5h-1zM168 141h1v7h-1zM169 138h1v5h-1zM170 138h1v5h-1zM171 133h1v9h-1zM172 135h1v5h-1zM173 132h1v8h-1zM174 136h1v4h-1zM175 136h1v4h-1zM176 136h1v4h-1zM177 136h1v4h-1zM178 133h1v7h-1zM179 136h1v4h-1zM180 133h1v7h-1zM181 137h1v4h-1zM182 137h1v4h-1zM183 136h1v8h-1zM184 137h1v5h-1zM185 137h1v6h-1zM186 137h1v5h-1zM187 137h1v6h-1zM188 137h1v5h-1zM189 137h1v5h-1zM190 135h1v5h-1zM191 133h1v7h-1zM192 135h1v5h-1zM193 135h1v5h-1zM194 135h1v7h-1zM195 135h1v5h-1zM196 135h1v6h-1zM197 136h1v5h-1zM198 136h1v7h-1zM199 134h1v7h-1zM200 135h1v6h-1zM201 136h1v5h-1zM202 136h1v8h-1zM203 135h1v6h-1zM204 134h1v10h-1zM205 136h1v5h-1zM206 135h1v6h-1zM207 136h1v6h-1zM208 136h1v4h-1zM209 133h1v7h-1zM210 134h1v6h-1zM211 136h1v5h-1zM212 135h1v6h-1zM213 136h1v5h-1zM214 136h1v5h-1zM215 135h1v8h-1zM216 137h1v5h-1zM217 137h1v4h-1zM218 137h1v4h-1zM219 137h1v4h-1zM220 137h1v4h-1zM221 136h1v5h-1zM222 135h1v6h-1zM223 135h1v6h-1zM224 137h1v4h-1zM225 137h1v6h-1zM226 137h1v5h-1zM227 138h1v6h-1zM228 138h1v5h-1zM229 138h1v5h-1zM230 135h1v7h-1zM231 138h1v4h-1zM232 138h1v4h-1zM233 138h1v5h-1zM234 138h1v5h-1zM235 138h1v8h-1zM236 138h1v7h-1zM237 141h1v5h-1zM238 140h1v6h-1zM239 141h1v5h-1zM240 142h1v6h-1zM241 142h1v5h-1zM242 142h1v5h-1zM243 142h1v6h-1zM244 142h1v4h-1zM245 142h1v4h-1zM246 142h1v4h-1zM247 140h1v6h-1zM248 141h1v5h-1zM249 139h1v7h-1zM250 141h1v5h-1zM251 139h1v7h-1zM252 141h1v5h-1zM253 141h1v4h-1zM254 141h1v4h-1zM255 139h1v6h-1zM256 140h1v5h-1zM257 140h1v5h-1zM258 139h1v5h-1zM259 139h1v5h-1zM260 139h1v6h-1zM261 138h1v4h-1zM262 137h1v7h-1zM263 134h1v7h-1zM264 135h1v7h-1zM265 135h1v4h-1zM266 135h1v4h-1zM267 132h1v7h-1zM268 133h1v6h-1zM269 132h1v7h-1zM270 134h1v6h-1zM271 135h1v5h-1zM272 133h1v7h-1zM273 135h1v5h-1zM274 133h1v7h-1zM275 135h1v6h-1zM276 133h1v6h-1zM277 134h1v8h-1zM278 134h1v6h-1zM279 134h1v8h-1zM280 132h1v8h-1zM281 134h1v6h-1zM282 134h1v7h-1zM283 134h1v5h-1zM284 135h1v5h-1zM285 135h1v8h-1zM286 133h1v7h-1zM287 135h1v5h-1zM288 134h1v6h-1zM289 135h1v5h-1zM290 134h1v6h-1zM291 133h1v9h-1zM292 135h1v6h-1zM293 135h1v5h-1zM294 136h1v4h-1zM295 136h1v4h-1zM296 136h1v5h-1zM297 135h1v6h-1zM298 137h1v5h-1zM299 138h1v6h-1zM300 138h1v5h-1zM301 139h1v4h-1zM302 139h1v7h-1zM303 140h1v5h-1zM304 140h1v6h-1zM305 138h1v7h-1zM306 140h1v5h-1zM307 140h1v5h-1zM308 140h1v5h-1zM309 138h1v6h-1zM310 138h1v6h-1zM311 139h1v7h-1zM312 139h1v5h-1zM313 138h1v8h-1zM314 139h1v5h-1zM315 138h1v7h-1zM316 140h1v5h-1zM317 140h1v5h-1zM318 139h1v5h-1zM319 139h1v5h-1zM320 138h1v7h-1zM321 136h1v9h-1zM322 140h1v5h-1zM323 138h1v6h-1zM324 138h1v7h-1zM325 137h1v5h-1zM326 134h1v6h-1zM327 132h1v7h-1zM328 135h1v4h-1zM329 134h1v5h-1zM330 133h1v9h-1zM331 134h1v5h-1zM332 132h1v7h-1zM333 134h1v5h-1zM334 134h1v4h-1zM335 133h1v5h-1zM336 133h1v5h-1zM337 134h1v5h-1zM338 134h1v5h-1zM339 131h1v9h-1zM340 132h1v6h-1zM341 134h1v7h-1zM342 134h1v5h-1zM343 132h1v7h-1zM344 134h1v5h-1zM345 134h1v5h-1zM346 134h1v5h-1zM347 135h1v4h-1zM348 134h1v6h-1zM349 135h1v5h-1zM350 132h1v8h-1zM351 136h1v6h-1zM352 136h1v4h-1zM353 135h1v5h-1zM354 135h1v5h-1zM355 137h1v6h-1zM356 137h1v4h-1zM357 137h1v8h-1zM358 138h1v5h-1zM359 139h1v4h-1zM360 137h1v7h-1zM361 137h1v6h-1zM362 136h1v5h-1zM363 137h1v7h-1zM364 137h1v4h-1zM365 137h1v4h-1zM366 138h1v4h-1zM367 138h1v4h-1zM368 138h1v4h-1zM369 138h1v4h-1zM370 138h1v5h-1zM371 138h1v4h-1zM372 137h1v5h-1zM373 137h1v7h-1zM374 137h1v7h-1zM375 137h1v7h-1zM376 137h1v5h-1zM377 135h1v6h-1zM378 137h1v7h-1zM379 137h1v4h-1zM380 137h1v5h-1zM381 137h1v4h-1zM382 137h1v6h-1zM383 137h1v4h-1zM384 137h1v5h-1zM385 135h1v7h-1zM386 135h1v7h-1zM387 135h1v10h-1zM388 137h1v5h-1zM389 137h1v5h-1zM390 135h1v8h-1zM391 138h1v4h-1zM392 138h1v4h-1zM393 138h1v4h-1zM394 138h1v5h-1zM395 138h1v5h-1zM396 138h1v8h-1zM397 138h1v5h-1zM398 138h1v5h-1zM399 138h1v5h-1zM400 138h1v5h-1zM401 138h1v5h-1zM402 138h1v4h-1zM403 137h1v4h-1zM404 136h1v5h-1zM405 136h1v5h-1zM406 134h1v7h-1zM407 136h1v5h-1zM408 136h1v6h-1zM409 136h1v6h-1zM410 135h1v7h-1zM411 135h1v5h-1zM412 135h1v7h-1zM413 135h1v5h-1zM414 134h1v6h-1zM415 135h1v6h-1zM416 137h1v5h-1zM417 134h1v8h-1zM418 137h1v5h-1zM419 137h1v5h-1zM420 135h1v9h-1zM421 135h1v6h-1zM422 135h1v9h-1zM423 136h1v6h-1zM424 137h1v5h-1zM425 137h1v5h-1zM426 136h1v5h-1zM427 137h1v4h-1zM428 137h1v4h-1zM429 137h1v4h-1zM430 135h1v6h-1zM431 134h1v8h-1zM432 135h1v5h-1zM433 136h1v4h-1zM434 136h1v4h-1zM435 135h1v9h-1zM436 135h1v6h-1zM437 139h1v4h-1zM438 139h1v5h-1zM439 139h1v5h-1zM440 140h1v4h-1zM441 140h1v5h-1zM442 140h1v6h-1zM443 141h1v4h-1zM444 141h1v5h-1zM445 138h1v8h-1zM446 141h1v6h-1zM447 138h1v6h-1zM448 138h1v7h-1zM449 141h1v5h-1zM450 141h1v8h-1zM451 141h1v8h-1zM452 141h1v7h-1zM453 140h1v7h-1zM454 140h1v6h-1zM455 141h1v5h-1zM456 138h1v6h-1zM457 139h1v5h-1zM458 139h1v5h-1zM459 139h1v5h-1zM460 139h1v5h-1zM461 139h1v5h-1zM462 139h1v5h-1zM463 136h1v7h-1zM464 138h1v4h-1zM465 137h1v6h-1zM466 137h1v5h-1zM467 137h1v5h-1zM468 134h1v7h-1zM469 136h1v4h-1zM470 135h1v4h-1zM471 134h1v5h-1zM472 133h1v5h-1zM473 133h1v6h-1zM474 134h1v4h-1zM475 135h1v4h-1zM476 135h1v4h-1zM477 135h1v5h-1zM478 135h1v5h-1zM479 134h1v5h-1zM480 134h1v5h-1zM481 134h1v5h-1zM482 134h1v5h-1zM483 134h1v5h-1zM484 134h1v7h-1zM485 135h1v7h-1zM486 135h1v5h-1zM487 133h1v7h-1zM488 135h1v5h-1zM489 133h1v7h-1zM490 135h1v5h-1zM491 136h1v4h-1zM492 136h1v4h-1zM493 135h1v5h-1zM494 135h1v6h-1zM495 136h1v4h-1zM496 136h1v5h-1zM497 136h1v4h-1zM498 136h1v6h-1zM499 136h1v4h-1zM500 136h1v7h-1zM501 136h1v5h-1zM502 136h1v4h-1zM503 136h1v4h-1zM504 135h1v4h-1zM505 135h1v4h-1zM506 135h1v4h-1zM507 132h1v7h-1zM508 134h1v7h-1zM509 132h1v7h-1zM510 134h1v5h-1zM511 134h1v5h-1zM512 134h1v5h-1zM513 134h1v5h-1zM514 134h1v7h-1zM515 134h1v7h-1zM516 134h1v6h-1zM517 134h1v8h-1zM518 134h1v7h-1zM519 135h1v4h-1zM520 135h1v4h-1zM521 136h1v5h-1zM522 136h1v5h-1zM523 133h1v8h-1zM524 135h1v6h-1zM525 136h1v6h-1zM526 137h1v5h-1zM527 138h1v4h-1zM528 138h1v4h-1zM529 138h1v6h-1zM530 138h1v6h-1zM531 139h1v4h-1zM532 140h1v4h-1zM533 140h1v4h-1zM534 140h1v5h-1zM535 140h1v5h-1zM536 140h1v5h-1zM537 138h1v7h-1zM538 140h1v5h-1zM539 138h1v6h-1zM540 140h1v4h-1zM541 140h1v4h-1zM542 140h1v4h-1zM543 140h1v4h-1zM544 138h1v8h-1zM545 140h1v7h-1zM546 140h1v4h-1zM547 139h1v5h-1zM548 138h1v6h-1zM549 138h1v6h-1zM550 137h1v7h-1zM551 135h1v7h-1zM552 133h1v7h-1zM553 131h1v7h-1zM554 134h1v5h-1zM555 134h1v4h-1zM556 134h1v4h-1zM557 132h1v6h-1zM558 133h1v4h-1zM559 133h1v4h-1zM560 132h1v5h-1zM561 132h1v7h-1zM562 132h1v5h-1zM563 132h1v5h-1zM564 132h1v5h-1zM565 130h1v7h-1zM566 129h1v10h-1zM567 132h1v7h-1zM568 132h1v5h-1zM569 131h1v5h-1zM570 132h1v4h-1zM571 132h1v4h-1zM572 133h1v7h-1zM573 133h1v5h-1zM574 131h1v7h-1zM575 133h1v5h-1zM576 133h1v5h-1zM577 133h1v5h-1zM578 134h1v4h-1zM579 134h1v4h-1zM580 134h1v4h-1zM581 134h1v8h-1zM582 135h1v4h-1zM583 133h1v6h-1zM584 134h1v4h-1zM585 134h1v8h-1zM586 134h1v5h-1zM587 135h1v4h-1zM588 137h1v4h-1zM589 135h1v6h-1zM590 136h1v6h-1zM591 137h1v6h-1zM592 137h1v5h-1zM593 138h1v4h-1zM594 136h1v7h-1zM595 137h1v4h-1zM596 137h1v8h-1zM597 138h1v4h-1zM598 138h1v4h-1zM599 136h1v6h-1zM600 138h1v4h-1zM601 136h1v6h-1zM602 136h1v7h-1zM603 138h1v5h-1zM604 137h1v5h-1zM605 137h1v6h-1zM606 136h1v6h-1zM607 138h1v4h-1zM608 138h1v4h-1zM609 138h1v4h-1zM610 138h1v5h-1zM611 139h1v4h-1zM612 139h1v5h-1zM613 139h1v6h-1zM614 138h1v6h-1zM615 139h1v5h-1zM616 139h1v5h-1zM617 140h1v4h-1zM618 136h1v6h-1zM619 136h1v4h-1zM620 133h1v5h-1zM621 132h1v4h-1zM622 132h1v4h-1zM623 132h1v4h-1zM624 132h1v8h-1zM625 132h1v5h-1zM626 132h1v5h-1zM627 132h1v5h-1zM628 132h1v4h-1zM629 132h1v4h-1zM630 132h1v4h-1zM631 129h1v7h-1zM632 131h1v7h-1zM633 128h1v7h-1zM634 131h1v4h-1zM635 131h1v4h-1zM636 130h1v5h-1zM637 129h1v6h-1zM638 129h1v6h-1zM639 129h1v6h-1zM640 129h1v7h-1zM641 132h1v4h-1zM642 132h1v4h-1zM643 132h1v5h-1zM644 131h1v8h-1zM645 132h1v5h-1zM646 133h1v5h-1zM647 133h1v5h-1zM648 133h1v5h-1zM649 134h1v6h-1zM650 134h1v4h-1zM651 134h1v5h-1zM652 133h1v5h-1zM653 131h1v7h-1zM654 133h1v5h-1zM655 133h1v5h-1zM656 132h1v6h-1zM657 133h1v5h-1zM658 131h1v6h-1zM659 133h1v4h-1zM660 133h1v4h-1zM661 133h1v6h-1zM662 133h1v4h-1zM663 133h1v4h-1zM664 133h1v4h-1zM665 132h1v5h-1zM666 131h1v7h-1zM667 130h1v8h-1zM668 133h1v8h-1zM669 135h1v4h-1zM670 134h1v5h-1zM671 134h1v5h-1zM672 135h1v4h-1zM673 135h1v6h-1zM674 135h1v4h-1zM675 135h1v4h-1zM676 134h1v4h-1zM677 134h1v4h-1zM678 134h1v4h-1zM679 130h1v8h-1zM680 133h1v7h-1zM681 133h1v5h-1zM682 134h1v4h-1zM683 134h1v4h-1zM684 134h1v6h-1zM685 134h1v7h-1zM686 135h1v6h-1zM687 135h1v6h-1zM688 135h1v4h-1zM689 134h1v4h-1zM690 134h1v7h-1zM691 133h1v5h-1zM692 134h1v5h-1zM693 134h1v5h-1zM694 134h1v7h-1zM695 134h1v7h-1zM696 133h1v6h-1zM697 134h1v5h-1zM698 134h1v5h-1zM699 134h1v5h-1zM700 130h1v9h-1zM701 133h1v5h-1zM702 130h1v9h-1zM703 133h1v5h-1zM704 133h1v6h-1zM705 135h1v4h-1zM706 135h1v5h-1zM707 135h1v4h-1zM708 135h1v4h-1zM709 135h1v4h-1zM710 135h1v4h-1zM711 135h1v6h-1zM712 134h1v5h-1zM713 132h1v9h-1zM714 134h1v5h-1zM715 134h1v5h-1zM716 133h1v6h-1zM717 135h1v4h-1zM718 135h1v4h-1zM719 135h1v4h-1zM720 134h1v5h-1zM721 135h1v4h-1zM722 135h1v5h-1zM723 134h1v7h-1zM724 134h1v6h-1zM725 132h1v7h-1zM726 133h1v7h-1zM727 135h1v5h-1zM728 135h1v4h-1zM729 135h1v6h-1zM730 135h1v8h-1zM731 135h1v8h-1zM732 136h1v5h-1zM733 134h1v7h-1zM734 137h1v4h-1zM735 136h1v6h-1zM736 137h1v5h-1zM737 138h1v4h-1zM738 138h1v5h-1zM739 138h1v8h-1zM740 137h1v6h-1zM741 139h1v4h-1zM742 139h1v4h-1zM743 137h1v8h-1zM744 139h1v4h-1zM745 139h1v4h-1zM746 138h1v8h-1zM747 139h1v5h-1zM748 139h1v6h-1zM749 137h1v8h-1zM750 140h1v4h-1zM751 140h1v4h-1zM752 137h1v7h-1zM753 140h1v4h-1zM754 139h1v4h-1zM755 139h1v5h-1zM756 139h1v5h-1zM757 139h1v5h-1zM758 139h1v5h-1zM759 138h1v5h-1zM760 136h1v6h-1zM761 134h1v4h-1zM762 134h1v4h-1zM763 134h1v4h-1zM764 133h1v5h-1zM765 133h1v7h-1zM766 132h1v6h-1zM767 133h1v5h-1zM768 134h1v5h-1zM769 134h1v4h-1zM770 134h1v4h-1zM771 134h1v4h-1zM772 132h1v5h-1zM773 133h1v5h-1zM774 133h1v4h-1zM775 133h1v4h-1zM776 133h1v4h-1zM777 133h1v4h-1zM778 135h1v4h-1zM779 135h1v6h-1zM780 135h1v4h-1zM781 135h1v4h-1zM782 135h1v4h-1z" fill="#d0c800"/>
</g>
<!-- logo -->
<g id="logo"><path id="lg" d="M25 7h3v14h-3z M33 7h3v14h-3z M28 11h5v4h-5z
 M39 10h12v2h-12z M39 12h4v1h-4z M47 12h4v9h-4z M39 14h8v2h-8z M39 16h3v3h-3z M39 19h15v2h-15z
 M54 10h10.5l0.5 0.5v1.5h-11z M54 12h3v9h-3z M62 12h3v9h-3z
 M68 7h3v14h-3z M71 10h4v2h-4z M71 19h4v2h-4z
 M77 10h12v3h-12z M77 13h4v1h-4z M86 13h3v1h-3z M77 14h12v3h-12z M77 17h4v2h-4z M77 19h18v2h-18z
 M92 7h3v14h-3z M95 14L99 10H102.6L97.6 15.3L102.6 21H99L95 17Z" fill="#ffff00" stroke="#42446a" stroke-width="0.8" stroke-opacity="0.5" paint-order="stroke"/></g>
<!-- header -->
<g id="hdr">
 <!-- icon 1 -->
 <rect x="145.5" y="3.5" width="22" height="20" fill="#000" stroke="#b4b4b2" stroke-width="1"/>
 <path d="M146.50 9.45L147.00 8.70L147.50 7.98L148.00 7.36L148.50 6.90L149.00 6.64L149.50 6.62L150.00 6.83L150.50 7.25L151.00 7.84L151.50 8.55L152.00 9.30L152.50 10.02L153.00 10.64L153.50 11.10L154.00 11.36L154.50 11.38L155.00 11.17L155.50 10.75L156.00 10.16L156.50 9.45L157.00 8.70L157.50 7.98L158.00 7.36L158.50 6.90L159.00 6.64L159.50 6.62L160.00 6.83L160.50 7.25L161.00 7.84L161.50 8.55L162.00 9.30L162.50 10.02L163.00 10.64L163.50 11.10L164.00 11.36L164.50 11.38L165.00 11.17L165.50 10.75L166.00 10.16L166.50 9.45" fill="none" stroke="#ffff00" stroke-width="2.3"/>
 <path d="M146.50 18.34L147.00 17.44L147.50 16.57L148.00 15.81L148.50 15.26L149.00 14.95L149.50 14.92L150.00 15.18L150.50 15.69L151.00 16.40L151.50 17.26L152.00 18.16L152.50 19.03L153.00 19.79L153.50 20.34L154.00 20.65L154.50 20.68L155.00 20.42L155.50 19.91L156.00 19.20L156.50 18.34L157.00 17.44L157.50 16.57L158.00 15.81L158.50 15.26L159.00 14.95L159.50 14.92L160.00 15.18L160.50 15.69L161.00 16.40L161.50 17.26L162.00 18.16L162.50 19.03L163.00 19.79L163.50 20.34L164.00 20.65L164.50 20.68L165.00 20.42L165.50 19.91L166.00 19.20L166.50 18.34" fill="none" stroke="#00ffff" stroke-width="2.3"/>
 <!-- icon 2 -->
 <rect x="170.5" y="3.5" width="22" height="20" fill="#000" stroke="#b4b4b2" stroke-width="1"/>
 <path d="M174.5 20.5L189 5.8" stroke="#00e800" stroke-width="2.4" stroke-linecap="round"/>
 <!-- icon 3 -->
 <rect x="195.5" y="3.5" width="22" height="20" fill="#000" stroke="#b4b4b2" stroke-width="1"/>
 <g fill="#8c8c8a" filter="url(#blur)"><rect x="198.2" y="13" width="11.3" height="8.8" rx="1.5"/><rect x="202.3" y="5" width="11.2" height="13" rx="2.5"/><rect x="211" y="8.3" width="3.6" height="6.8" rx="1"/></g>
 <path d="M200.5 14.5v6.5 M203 15v6.5 M206.5 6.5v14 M209.5 6v12 M212 9v6" stroke="#6a6a68" stroke-width="0.6"/>
 <!-- inset box -->
 <path d="M263 2.5H223L220.5 5V20L222.5 22.5" fill="none" stroke="#383438" stroke-width="1.2"/>
 <!-- pulse -->
 <path d="M271.5 21.2H276V6H285.2V21.2H292 M276 5.8H285.5" fill="none" stroke="#d8ffff" stroke-width="2"/>
 <path d="M273.5 22V17.3 M277.7 3V8.8 M279.8 3V8.8 M281.9 3V8.8 M284 3V8.8 M287.5 22V18 M289.6 22V18 M291.6 22V18 M271.5 20V22.3" fill="none" stroke="#d8ffff" stroke-width="1.1"/>
 <!-- A box -->
 <rect x="295.9" y="3.9" width="20.2" height="20.6" fill="none" stroke="#7470b8" stroke-width="1.3"/>
 <path d="M296.5 4.6H315.4 M296.5 23.6H315.4 M296.6 4.6V23.6" stroke="#d0c8c0" stroke-width="0.9"/>
 <!-- key -->
 <path d="M320 14.2L321.5 12.4H337V16.1H321.5Z M322.8 16h2.8v3h-2.8z M327.2 16h2.8v3h-2.8z M331 16h2.8v2.6h-2.8z" fill="#3c3e3a"/>
 <ellipse cx="339.6" cy="14.5" rx="3.4" ry="5.6" fill="#3c3e3a"/>
 <ellipse cx="339.6" cy="14.6" rx="1.1" ry="2.4" fill="#555753"/>
 <!-- floppy -->
 <path d="M345.3 3V19.5" stroke="#6a60d8" stroke-width="1"/>
 <path d="M364.3 4.2V21.3H357" fill="none" stroke="#6a60d8" stroke-width="1"/>
 <path d="M350.6 4V11.3H361V4" fill="none" stroke="#8a80e0" stroke-width="1"/>
 <path d="M346.3 3.5H365.3V22.3H348.5L346.3 20.1Z" fill="none" stroke="#b0ecd8" stroke-width="1"/>
 <path d="M349.5 3.5V12.3H362V3.5" fill="none" stroke="#b0ecd8" stroke-width="1"/>
 <path d="M351 22V15.5H360.7V22" fill="none" stroke="#b0ecd8" stroke-width="1"/>
 <rect x="355" y="15.5" width="5.3" height="6.5" fill="#c8fcfc"/>
 <rect x="351" y="4.5" width="1.3" height="6.5" fill="#2a1aa8"/>
 <rect x="352.8" y="16.5" width="1.3" height="4.5" fill="#2a1aa8"/>
 <rect x="348.7" y="19.5" width="1.2" height="1.5" fill="#2a1aa8"/>
 <!-- printer -->
 <path d="M375.9 13.2V3.7H387.2V13.2" fill="none" stroke="#3e413c" stroke-width="1.7"/>
 <rect x="371.9" y="13.8" width="19.2" height="8.9" rx="1.2" fill="none" stroke="#3e413c" stroke-width="1.7"/>
 <path d="M378 5.5h7v1.2h-7z M378 8h7v1.6h-7z M378 11h7v1.2h-7z M374 17h15v3h-15z" fill="#3e413c"/>
 <!-- separator -->
 <rect x="396" y="1" width="1" height="26" fill="#000"/>
 <rect x="397" y="1" width="1" height="26" fill="#9a9a98"/>
 <!-- orange wave box -->
 <path d="M406 3H403.5V24.5H406" fill="none" stroke="#6a66b8" stroke-width="1"/>
 <path d="M514.5 2.5H516V24.5H514.5" fill="none" stroke="#6a66b8" stroke-width="1"/>
 <rect x="405" y="24" width="110" height="1" fill="#5a3a78"/>
 <rect x="514" y="3" width="1" height="21" fill="#000"/>
 <rect x="406.3" y="4.55" width="106.4" height="18.15" fill="#000" stroke="#ff6a10" stroke-width="2.6"/>
 <path d="M408.00 12.34L408.50 15.02L409.00 17.46L409.50 19.27L410.00 20.15L410.50 19.94L411.00 18.70L411.50 16.61L412.00 14.03L412.50 11.38L413.00 9.09L413.50 7.55L414.00 7.00L414.50 7.54L415.00 9.07L415.50 11.35L416.00 14.00L416.50 16.59L417.00 18.68L417.50 19.94L418.00 20.15L418.50 19.28L419.00 17.48L419.50 15.04L420.00 12.37L420.50 9.89L421.00 8.03L421.50 7.08L422.00 7.21L422.50 8.39L423.00 10.42L423.50 12.98L424.00 15.64L424.50 17.97L425.00 19.57L425.50 20.20L426.00 19.73L426.50 18.26L427.00 16.02L427.50 13.38L428.00 10.78L428.50 8.64L429.00 7.32L429.50 7.03L430.00 7.82L430.50 9.57L431.00 11.97L431.50 14.65L432.00 17.15L432.50 19.07L433.00 20.09L433.50 20.04L434.00 18.93L434.50 16.94L435.00 14.41L435.50 11.74L436.00 9.38L436.50 7.71L437.00 7.01L437.50 7.40L438.00 8.81L438.50 11.00L439.00 13.63L439.50 16.25L440.00 18.43L440.50 19.82L441.00 20.19L441.50 19.47L442.00 17.78L442.50 15.41L443.00 12.74L443.50 10.21L444.00 8.24L444.50 7.15L445.00 7.12L445.50 8.16L446.00 10.10L446.50 12.61L447.00 15.28L447.50 17.68L448.00 19.40L448.50 20.17L449.00 19.86L449.50 18.52L450.00 16.37L450.50 13.76L451.00 11.13L451.50 8.90L452.00 7.45L452.50 7.00L453.00 7.65L453.50 9.27L454.00 11.61L454.50 14.27L455.00 16.83L455.50 18.85L456.00 20.01L456.50 20.11L457.00 19.14L457.50 17.26L458.00 14.78L458.50 12.10L459.00 9.67L459.50 7.89L460.00 7.04L460.50 7.28L461.00 8.55L461.50 10.66L462.00 13.25L462.50 15.90L463.00 18.17L463.50 19.68L464.00 20.20L464.50 19.63L465.00 18.07L465.50 15.77L466.00 13.12L466.50 10.54L467.00 8.47L467.50 7.24L468.00 7.06L468.50 7.96L469.00 9.78L469.50 12.23L470.00 14.91L470.50 17.37L471.00 19.21L471.50 20.13L472.00 19.97L472.50 18.76L473.00 16.71L473.50 14.14L474.00 11.48L474.50 9.17L475.00 7.59L475.50 7.00L476.00 7.50L476.50 9.00L477.00 11.25L477.50 13.90L478.00 16.49L478.50 18.61L479.00 19.90L479.50 20.16L480.00 19.34L480.50 17.57L481.00 15.15L481.50 12.47L482.00 9.98L482.50 8.09L483.00 7.10L483.50 7.18L484.00 8.32L484.50 10.33L485.00 12.87L485.50 15.54L486.00 17.89L486.50 19.53L487.00 20.19L487.50 19.77L488.00 18.34L488.50 16.12L489.00 13.49L489.50 10.88L490.00 8.71L490.50 7.35L491.00 7.02L491.50 7.77L492.00 9.48L492.50 11.87L493.00 14.54L493.50 17.06L494.00 19.01L494.50 20.07L495.00 20.06L495.50 18.99L496.00 17.04L496.50 14.51L497.00 11.84L497.50 9.46L498.00 7.76L498.50 7.02L499.00 7.36L499.50 8.73L500.00 10.90L500.50 13.52L501.00 16.15L501.50 18.36L502.00 19.78L502.50 20.19L503.00 19.52L503.50 17.87L504.00 15.51L504.50 12.85L505.00 10.30L505.50 8.30L506.00 7.18L506.50 7.10L507.00 8.10L507.50 10.01L508.00 12.50L508.50 15.18L509.00 17.59L509.50 19.35L510.00 20.16L510.50 19.90L511.00 18.59L511.50 16.47L512.00 13.87" fill="none" stroke="#00f4ff" stroke-width="2.6"/>
 <!-- W box -->
 <rect x="521.5" y="3.5" width="21" height="21" fill="#000" stroke="#b4b4b2" stroke-width="1"/>
 <!-- pill -->
 <rect x="547" y="3" width="99" height="21" rx="8" fill="#000" stroke="#2a2a2a" stroke-width="0.8"/>
</g>
<!-- top tag -->
<path d="M364 29H434V41.5L431 44.5H405L400 52L394 44.5H367L364 41.5Z" fill="#3a6ff2"/>
<path d="M367 44.5H394L400 52L405 44.5H431L434 41.5" fill="none" stroke="#9cc4ff" stroke-width="1"/>
<rect x="364" y="29" width="70" height="1" fill="#8cb8ff"/>
<!-- ch1 marker -->
<path d="M0 232H8L15.5 239L8 246H0Z" fill="#ffff00"/>
<path d="M4.3 245V234.5L1.2 237" fill="none" stroke="#2c2e44" stroke-width="1.5"/>
<!-- trigger level marker -->
<path d="M784 167V182.5L771 175Z" fill="#ffff00"/>
<!-- bottom bar -->
<rect x="16" y="456.5" width="17" height="2" fill="#f0f000"/>
<path d="M16 460.8h4v1.3h-4z M21 460.8h3v1.3h-3z M25 460.8h3v1.3h-3z M29 460.8h3.2v1.3h-3.2z" fill="#e8e400"/>
<path d="M45.2 455.6H52.8L58 460.8V468.8L52.8 474H45.2L40 468.8V460.8Z" fill="none" stroke="#3c3e3a" stroke-width="2"/>
<path d="M64 462.5H66.5V458H71V462.5H74V458H78.5V462.5H82" fill="none" stroke="#f0f000" stroke-width="1.5"/>
<path d="M64.5 466.8H67V471H71V466.8H74.5V471H78.5V466.8H82" fill="none" stroke="#7272bc" stroke-width="1.3"/>
<rect x="87" y="453" width="82" height="22" rx="11" fill="#000"/>
<rect x="171" y="452" width="1" height="26" fill="#000"/>
<rect x="172" y="452" width="1" height="26" fill="#8a8a88"/>
<rect x="331" y="452" width="1" height="26" fill="#000"/>
<rect x="332" y="452" width="1" height="26" fill="#8a8a88"/>
<path d="M378.5 470V458.6L375.6 461.3" fill="none" stroke="#ffff00" stroke-width="1.3"/>
<path d="M385 473H391L398 456.5H403" fill="none" stroke="#8ccaff" stroke-width="1.8"/>
<rect x="405" y="453" width="78" height="22" rx="11" fill="#000"/>
<rect x="501" y="452" width="1" height="26" fill="#000"/>
<rect x="502" y="452" width="1" height="26" fill="#8a8a88"/>
<rect x="513" y="453" width="130" height="22" rx="11" fill="#000"/>
</svg>
<div class="t" style="left:298px;top:4px;font-size:20px;font-weight:bold;color:#d8ffff;">A</div>
<div class="t" style="left:522.5px;top:4px;font-size:19px;font-weight:bold;color:#d8ffff;">W</div>
<div class="t" style="left:573px;top:7px;font-size:16px;color:#fff;-webkit-text-stroke:0.25px #000;">2.00us</div>
<div class="t" style="left:708px;top:7px;font-size:16px;letter-spacing:-0.4px;color:#ccfffb;-webkit-text-stroke:0.2px #555753;">Меню</div>
<div class="t" style="left:376px;top:29px;font-size:17px;letter-spacing:-0.65px;color:#fff;-webkit-text-stroke:0.25px #3a6ff2;">0.000s</div>
<div class="t" style="left:16px;top:463px;font-size:12.5px;letter-spacing:-0.6px;color:#e8e400;">DC</div>
<div class="t" style="left:41px;top:457px;font-size:16px;font-weight:bold;letter-spacing:-0.5px;transform-origin:0 0;transform:scaleX(0.82);color:#3a3c38;">20</div>
<div class="t" style="left:107px;top:458px;font-size:16px;color:#ffff00;-webkit-text-stroke:0.25px #000;">2.00V</div>
<div class="t" style="left:352px;top:457px;font-size:16px;letter-spacing:-0.3px;color:#ffff00;-webkit-text-stroke:0.25px #555753;">CH</div>
<div class="t" style="left:423px;top:457px;font-size:16px;color:#ffff00;-webkit-text-stroke:0.25px #000;">2.56V</div>
<div class="t" style="left:540px;top:457px;font-size:16px;color:#ffff00;-webkit-text-stroke:0.25px #000;">0.00000Hz</div>
<div class="t" style="left:660px;top:457px;font-size:16px;letter-spacing:0.17px;color:#f4f4f4;-webkit-text-stroke:0.25px #555753;">30-June-23 23:22</div>
</body></html>
